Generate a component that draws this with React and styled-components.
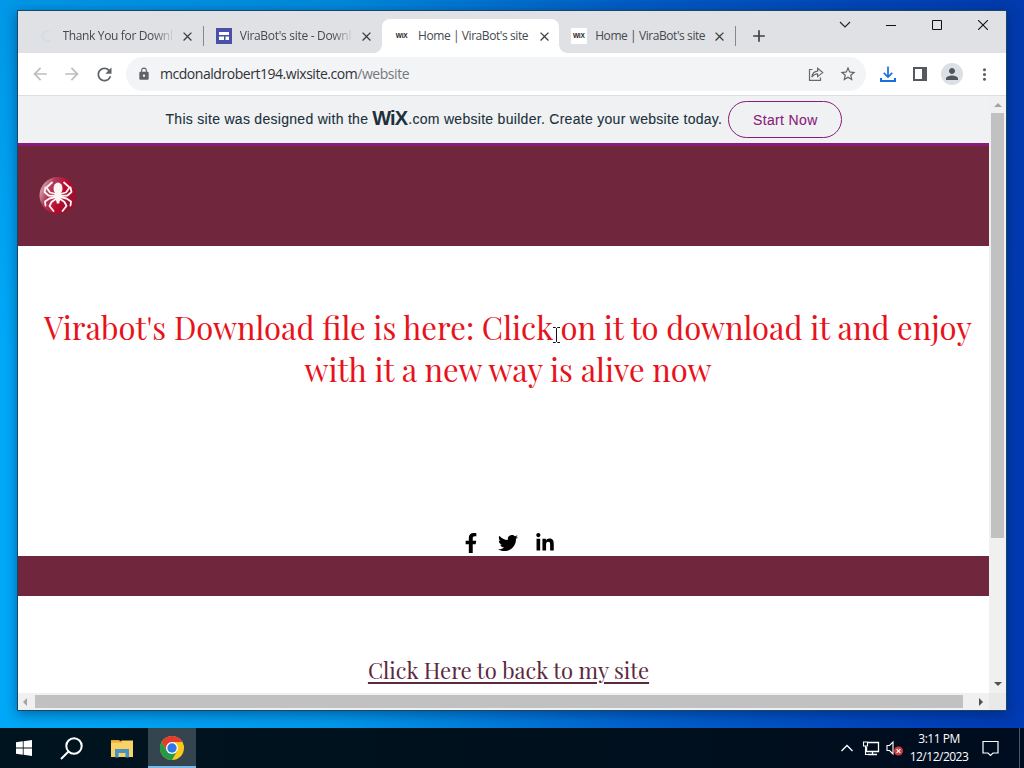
"use strict";

/*******************************************************
  IMPORT STATEMENTS
*******************************************************/
import React from "react";
import styled, {createGlobalStyle} from "styled-components";
import {FaFacebookF,FaTwitter,FaLinkedinIn} from "react-icons/fa";
import {MdArrowBack,MdArrowForward,MdRefresh,MdLock,MdStarBorder,MdPerson,MdMoreVert,MdClose,MdAdd} from "react-icons/md";

const Theme = {
  ui: `"Open Sans", "Noto Sans", sans-serif`,
  sans: `"Liberation Sans", Arial, sans-serif`,
  serif: `"Playfair Display", "Liberation Serif", serif`,
  maroon: '#70273e',
  strip: '#dfe1e5',
  icon: '#5f6368',
  purple: '#8a1a7c',
  scrollTrack: '#f0f0f0',
  scrollThumb: '#c1c1c1'
};

const GlobalStyle = createGlobalStyle`
  * { box-sizing: border-box; }
  body { margin: 0; overflow: hidden; }
  svg { display: block; flex: none; }
`;

/*******************************************************
  DESKTOP AND WINDOW FRAME
*******************************************************/
const Desktop = styled.div`
  width: 1024px;
  height: 768px;
  display: flex;
  flex-direction: column;
  justify-content: space-between;
  background:
    linear-gradient(to bottom, rgba(0,60,140,0.16), rgba(0,60,140,0) 45%),
    linear-gradient(to right, #00a9f8 0%, #0098ea 33%, #0062ce 62%, #0046bd 85%, #003ab2 100%);
`;

const Window = styled.div`
  width: 990px;
  height: 701px;
  margin: 10px 0 0 17px;
  border: 1px solid #17456b;
  background: #fff;
  display: flex;
  flex-direction: column;
  box-shadow: 0 3px 12px rgba(0,20,60,0.45);
`;

/*******************************************************
  TAB STRIP
*******************************************************/
const TabStrip = styled.div`
  height: 42px;
  flex: none;
  display: flex;
  align-items: flex-end;
  padding-left: 9px;
  background: ${Theme.strip};
`;

const TabBox = styled.div`
  position: relative;
  width: 177.3px;
  height: 34px;
  display: flex;
  align-items: center;
  padding-left: 12px;
  border-radius: 8px 8px 0 0;
  background: ${p => p.$active ? '#fff' : 'transparent'};
  &::before, &::after {
    content: ${p => p.$active ? '""' : 'none'};
    position: absolute;
    bottom: 0;
    width: 8px;
    height: 8px;
  }
  &::before {
    left: -8px;
    background: radial-gradient(circle at 0 0, transparent 7.5px, #fff 8px);
  }
  &::after {
    right: -8px;
    background: radial-gradient(circle at 100% 0, transparent 7.5px, #fff 8px);
  }
`;

const TabTitle = styled.div`
  width: ${p => p.$fade ? '114px' : '113px'};
  margin-left: ${p => p.$fade ? '7.5px' : '8.5px'};
  overflow: hidden;
  white-space: nowrap;
  font: 12px/18px ${Theme.ui};
  letter-spacing: ${p => p.$spacing || '-0.43px'};
  color: #45494d;
  ${p => p.$fade && 'mask-image: linear-gradient(to right, #000 80%, transparent);'}
`;

const TabClose = styled.div`
  margin-left: 5.5px;
  color: #3c4043;
`;

const TabDivider = styled.div`
  width: 1px;
  height: 20px;
  margin-left: 8px;
  background: #85888c;
`;

const WixFavicon = styled.div`
  width: 16px;
  height: 16px;
  background: #fff;
  text-align: center;
  font: bold 6.5px/16px ${Theme.sans};
  letter-spacing: -0.2px;
  color: #222;
`;

const NewTab = styled.div`
  height: 34px;
  margin-left: 13px;
  display: flex;
  align-items: center;
  color: #3c4043;
`;

const WindowButtons = styled.div`
  align-self: flex-start;
  margin-left: auto;
  height: 28px;
  display: flex;
`;

const WindowButton = styled.div`
  width: 46px;
  display: flex;
  align-items: center;
  justify-content: center;
`;

const LoadingFavicon = () => (
  <svg width="16" height="16" viewBox="0 0 16 16">
    <path d="M11 4.500A4.500 5 0 1 0 11 12" fill="none" stroke="#d5dde3" strokeWidth="2"/>
  </svg>
);

const SiteFavicon = () => (
  <svg width="16" height="16" viewBox="0 0 16 16">
    <rect width="16" height="16" fill="#4a50a8"/>
    <path d="M3 4h10v3H3zM3 8.500h5v3.500H3zM9.500 8.500H13V12H9.500z" fill="#fff"/>
  </svg>
);

const Tab = ({icon,title,active,fade,divider,spacing}) => {
  return (
    <TabBox $active={active}>
      {icon}
      <TabTitle $fade={fade} $spacing={spacing}>{title}</TabTitle>
      <TabClose><MdClose size={15}/></TabClose>
      {divider ? <TabDivider/> : null}
    </TabBox>
  )
}

/*******************************************************
  TOOLBAR
*******************************************************/
const Toolbar = styled.div`
  height: 43px;
  flex: none;
  display: flex;
  align-items: center;
  padding: 0 6px 0 6px;
  background: #fff;
  border-bottom: 1px solid #dcdee0;
`;

const ToolButton = styled.div`
  width: 32px;
  height: 32px;
  display: flex;
  align-items: center;
  justify-content: center;
  color: ${p => p.$disabled ? '#bbbdc0' : Theme.icon};
`;

const AddressBar = styled.div`
  width: 740px;
  height: 34px;
  margin: 0 6px 0 6px;
  padding: 0 2px 0 11px;
  display: flex;
  align-items: center;
  border-radius: 17px;
  background: #f3f4f6;
`;

const Address = styled.div`
  flex: 1;
  margin-left: 9px;
  font: 14px/20px ${Theme.ui};
  letter-spacing: -0.46px;
  color: #303236;
  span { color: #75787c; }
`;

const Avatar = styled.div`
  width: 22px;
  height: 22px;
  border-radius: 50%;
  display: flex;
  align-items: center;
  justify-content: center;
  background: #dcdfe4;
  color: #51555c;
`;

const ShareIcon = () => (
  <svg width="16" height="16" viewBox="0 0 16 16" fill="none" stroke="#66696e" strokeWidth="1.2">
    <path d="M4.500 3.500H1.500V14.300H12.500V11.500"/>
    <path d="M3.800 11.200C4.300 7.500 6.300 5.400 9.600 5.200V2.300L14.700 6.600L9.600 10.600V7.800C7.200 7.800 5.300 8.800 3.800 11.200Z"/>
  </svg>
);

const DownloadIcon = () => (
  <svg width="16" height="17" viewBox="0 0 16 17" fill="none" stroke="#1a6fe0" strokeWidth="2">
    <path d="M8 0.500V10.500M3.800 6.800L8 11L12.200 6.800" strokeWidth="1.700"/>
    <path d="M1 12V15H15V12"/>
  </svg>
);

const PanelIcon = () => (
  <svg width="14" height="14" viewBox="0 0 14 14">
    <path d="M1 1H13V13H1Z" fill="none" stroke="#55585d" strokeWidth="2"/>
    <path d="M9 1H13V13H9Z" fill="#55585d"/>
  </svg>
);

/*******************************************************
  WEB PAGE
*******************************************************/
const Viewport = styled.div`
  flex: 1;
  min-height: 0;
  display: grid;
  grid-template-columns: 971px 17px;
  grid-template-rows: 1fr 17px;
`;

const Page = styled.div`
  min-height: 0;
  overflow: hidden;
  background: #fff;
`;

const Banner = styled.div`
  height: 47px;
  display: flex;
  align-items: center;
  padding: 0 0 1px 147.5px;
  white-space: nowrap;
  background: #eff1f2;
  font: 14px/20px ${Theme.sans};
  color: #20303c;
`;

const BannerText = styled.span`
  letter-spacing: 0.29px;
  -webkit-text-stroke: 0.1px #20303c;
`;

const WixWord = styled.span`
  width: 36px;
  margin-left: 4px;
  font: bold 20px/20px ${Theme.sans};
  letter-spacing: -0.9px;
  padding-bottom: 2px;
`;

const StartButton = styled.div`
  width: 114px;
  height: 37px;
  margin: 1px 0 0 6px;
  border: 1px solid ${Theme.purple};
  border-radius: 19px;
  text-align: center;
  line-height: 36px;
  letter-spacing: 0.36px;
  -webkit-text-stroke: 0.1px ${Theme.purple};
  color: ${Theme.purple};
`;

const SiteHeader = styled.div`
  height: 103px;
  padding: 31px 0 0 21px;
  border-top: 3px solid ${Theme.purple};
  background: ${Theme.maroon};
`;

const Hero = styled.div`
  height: 310px;
  padding-top: 60px;
  display: flex;
  flex-direction: column;
  align-items: center;
`;

const HeroLine = styled.div`
  position: relative;
  height: 42px;
  margin-left: 9px;
  white-space: nowrap;
  font: 31px/42px ${Theme.serif};
  color: #e8121b;
`;

const Social = styled.div`
  display: flex;
  align-items: center;
  gap: 17px;
  margin: auto 0 3px 8px;
`;

const FooterBar = styled.div`
  height: 40px;
  background: ${Theme.maroon};
`;

const BackLink = styled.div`
  padding: 59px 0 0 10px;
  text-align: center;
  font: 22px/30px ${Theme.serif};
  color: #5c2a40;
  text-decoration: underline;
  text-decoration-thickness: 2px;
  text-underline-offset: 3px;
`;

const TextCursor = styled.svg`
  position: absolute;
  left: 508px;
  top: 21px;
`;

/* Round red badge with a white spider on it */
const SpiderLogo = () => (
  <svg width="38" height="38" viewBox="0 0 38 38">
    <defs>
      <linearGradient id="badge" x1="0" y1="0.35" x2="0.8" y2="0.7">
        <stop offset="0" stopColor="#d9a5b2"/>
        <stop offset="0.3" stopColor="#b03a58"/>
        <stop offset="0.7" stopColor="#b80a2e"/>
        <stop offset="1" stopColor="#98122f"/>
      </linearGradient>
    </defs>
    <circle cx="19" cy="18.500" r="18.500" fill="url(#badge)"/>
    <g fill="none" stroke="#fff4f4" strokeWidth="1.800" strokeLinejoin="round" strokeLinecap="round">
      <path d="M17 17L11 15.500L7.500 10.500L13 5.500M21 17L27 15.500L30.500 10.500L25 5.500"/>
      <path d="M17 19L9.500 18.500L5.500 15L6.500 10.500M21 19L28.500 18.500L32.500 15L31.500 10.500"/>
      <path d="M17 20L10.500 21.500L6 24.500L6.500 28.500M21 20L27.500 21.500L32 24.500L31.500 28.500"/>
      <path d="M17.500 21.500L12.500 25L10.500 29L14.500 34M20.500 21.500L25.500 25L27.500 29L23.500 34"/>
    </g>
    <ellipse cx="19" cy="11.500" rx="4.500" ry="6" fill="#fff4f4"/>
    <path d="M15.500 16H22.500L22 22L20.500 24.500L20.300 26.500H17.700L17.500 24.500L16 22Z" fill="#fff4f4"/>
  </svg>
);

/*******************************************************
  SCROLLBARS
*******************************************************/
const VScroll = styled.div`
  display: flex;
  flex-direction: column;
  align-items: center;
  padding: 5px 0 5px;
  background: ${Theme.scrollTrack};
`;

const VThumb = styled.div`
  width: 13px;
  height: 425px;
  margin: 4px 0 auto;
  background: ${Theme.scrollThumb};
`;

const HScroll = styled.div`
  display: flex;
  align-items: center;
  padding: 0 4px 0 4px;
  background: ${Theme.scrollTrack};
`;

const HThumb = styled.div`
  width: 928px;
  height: 13px;
  margin: 0 auto 0 5px;
  background: ${Theme.scrollThumb};
`;

const Corner = styled.div`
  background: #e9e9e9;
`;

const Arrow = ({d,dim}) => (
  <svg width="8" height="8" viewBox="0 0 8 8"><path d={d} fill={dim ? '#a3a3a3' : '#505050'}/></svg>
);

/*******************************************************
  TASKBAR
*******************************************************/
const Taskbar = styled.div`
  height: 40px;
  display: flex;
  color: #fff;
  background: linear-gradient(to right, #00141f, #00111d 50%, #000c1f);
`;

const TaskButton = styled.div`
  width: ${p => p.$width || 48}px;
  display: flex;
  align-items: center;
  justify-content: center;
  background: ${p => p.$active ? '#34454f' : 'transparent'};
  border-bottom: ${p => p.$active ? '2px solid #76b9ed' : '0'};
  padding-top: ${p => p.$active ? '2px' : '0'};
`;

const Tray = styled.div`
  margin-left: auto;
  display: flex;
  align-items: center;
`;

const Clock = styled.div`
  width: 70px;
  text-align: center;
  white-space: nowrap;
  font: 12px/18px ${Theme.ui};
  letter-spacing: -0.5px;
`;

const NotifyIcon = styled.svg`
  margin-left: 8px;
`;

const ShowDesktop = styled.div`
  width: 5px;
  height: 40px;
  margin-left: 20px;
  border-left: 1px solid #4a5563;
`;

const ChromeIcon = () => (
  <svg width="24" height="24" viewBox="0 0 24 24">
    <circle cx="12" cy="12" r="12" fill="#fbc919"/>
    <path d="M12 6H22.400A12 12 0 0 0 1.600 6L6.800 15Z" fill="#e33b2e"/>
    <path d="M1.600 6A12 12 0 0 0 12 24L17.200 15L12 12L6.800 15Z" fill="#229a48"/>
    <circle cx="12" cy="12" r="6" fill="#fff"/>
    <circle cx="12" cy="12" r="4.700" fill="#2f77e6"/>
  </svg>
);

const FolderIcon = () => (
  <svg width="22" height="19" viewBox="0 0 22 19">
    <path d="M0 1H8L10 3H0Z" fill="#e0a02c"/>
    <path d="M0 2.500H9.500L11 1.500H22V18H0Z" fill="#fad163"/>
    <path d="M0 2.500H9.500L11 1.500V3.500H0Z" fill="#e5aa37"/>
    <path d="M4 10H18V18.500H14.500V14H7.500V18.500H4Z" fill="#4593c5"/>
  </svg>
);

const TrayIcons = () => (
  <svg width="64" height="20" viewBox="0 0 64 20" fill="none" stroke="#fff" strokeWidth="1.300">
    <path d="M1.500 13L7 7.500L12.500 13"/>
    <path d="M28 4.500H38.500V13.500H26.500V9M32.500 13.500V16.500M28 16.500H37"/>
    <path d="M23.500 4H27.500V8H23.500ZM25.500 8V16.500H28" strokeWidth="1.100"/>
    <path d="M47 7.500H49.500L53 4V16L49.500 12.500H47Z" strokeWidth="1.100"/>
    <circle cx="58.500" cy="13" r="4.500" fill="#d3393c" stroke="none"/>
    <path d="M56.700 11.200L60.300 14.800M60.300 11.200L56.700 14.800" strokeWidth="1.200"/>
  </svg>
);

/*******************************************************
  COMPONENT DEFINITION
*******************************************************/
const ChromeWindow = () => {
  return (
    <Window>
      <TabStrip>
        <Tab icon={<LoadingFavicon/>} title="Thank You for Downl" fade divider spacing="-0.35px"/>
        <Tab icon={<SiteFavicon/>} title="ViraBot's site - Downl" fade spacing="-0.3px"/>
        <Tab icon={<WixFavicon>WiX</WixFavicon>} title="Home | ViraBot's site" active/>
        <Tab icon={<WixFavicon>WiX</WixFavicon>} title="Home | ViraBot's site" divider/>
        <NewTab><MdAdd size={20}/></NewTab>
        <WindowButtons>
          <WindowButton><svg width="12" height="8" viewBox="0 0 12 8"><path d="M1 1L6 6L11 1" fill="none" stroke="#222" strokeWidth="1.100"/></svg></WindowButton>
          <WindowButton><svg width="10" height="2" viewBox="0 0 10 2"><path d="M0 1.500H10" stroke="#111" strokeWidth="1"/></svg></WindowButton>
          <WindowButton><svg width="10" height="10" viewBox="0 0 10 10"><path d="M0.500 0.500H9.500V9.500H0.500Z" fill="none" stroke="#111"/></svg></WindowButton>
          <WindowButton><svg width="10" height="10" viewBox="0 0 10 10"><path d="M0 0L10 10M10 0L0 10" stroke="#111" strokeWidth="1.100"/></svg></WindowButton>
        </WindowButtons>
      </TabStrip>
      <Toolbar>
        <ToolButton $disabled><MdArrowBack size={20}/></ToolButton>
        <ToolButton $disabled><MdArrowForward size={20}/></ToolButton>
        <ToolButton><MdRefresh size={21}/></ToolButton>
        <AddressBar>
          <MdLock size={14} color={Theme.icon}/>
          <Address>mcdonaldrobert194.wixsite.com<span>/website</span></Address>
          <ToolButton><ShareIcon/></ToolButton>
          <ToolButton><MdStarBorder size={18}/></ToolButton>
        </AddressBar>
        <ToolButton><DownloadIcon/></ToolButton>
        <ToolButton><PanelIcon/></ToolButton>
        <ToolButton><Avatar><MdPerson size={18}/></Avatar></ToolButton>
        <ToolButton><MdMoreVert size={19}/></ToolButton>
      </Toolbar>
      <Viewport>
        <Page>
          <Banner>
            <BannerText>This site was designed with the</BannerText>
            <WixWord>WiX</WixWord>
            <BannerText>.com website builder. Create your website today.</BannerText>
            <StartButton>Start Now</StartButton>
          </Banner>
          <SiteHeader><SpiderLogo/></SiteHeader>
          <Hero>
            <HeroLine>
              Virabot's Download file is here: Click on it to download it and enjoy
              <TextCursor width="9" height="16" viewBox="0 0 9 16">
                <path d="M1 0.500H3.500L4.500 1.500L5.500 0.500H8M4.500 1.500V14.500M1 15.500H3.500L4.500 14.500L5.500 15.500H8" fill="none" stroke="#111"/>
              </TextCursor>
            </HeroLine>
            <HeroLine>with it a new way is alive now</HeroLine>
            <Social>
              <FaFacebookF size={20}/>
              <FaTwitter size={20}/>
              <FaLinkedinIn size={20}/>
            </Social>
          </Hero>
          <FooterBar/>
          <BackLink>Click Here to back to my site</BackLink>
        </Page>
        <VScroll>
          <Arrow d="M0 6L4 2L8 6Z" dim/>
          <VThumb/>
          <Arrow d="M0 2H8L4 6Z"/>
        </VScroll>
        <HScroll>
          <Arrow d="M5 0V8L1 4Z" dim/>
          <HThumb/>
          <Arrow d="M2 0L6 4L2 8Z"/>
        </HScroll>
        <Corner/>
      </Viewport>
    </Window>
  )
}

const App = () => {
  return (
    <Desktop>
      <GlobalStyle/>
      <ChromeWindow/>
      <Taskbar>
        <TaskButton>
          <svg width="16" height="16" viewBox="0 0 16 16" fill="#fff"><path d="M0 2.200L6.800 1.300V7.600H0ZM7.600 1.200L16 0V7.600H7.600ZM0 8.400H6.800V14.700L0 13.800ZM7.600 8.400H16V16L7.600 14.800Z"/></svg>
        </TaskButton>
        <TaskButton>
          <svg width="24" height="23" viewBox="0 0 24 23" fill="none" stroke="#fff" strokeWidth="2"><circle cx="14" cy="9" r="7.700"/><path d="M8.500 14.500L1 22"/></svg>
        </TaskButton>
        <TaskButton $width={52}><FolderIcon/></TaskButton>
        <TaskButton $active><ChromeIcon/></TaskButton>
        <Tray>
          <TrayIcons/>
          <Clock>3:11 PM<br/>12/12/2023</Clock>
          <NotifyIcon width="17" height="17" viewBox="0 0 17 17"><path d="M1 1.500H16V13H11L8.500 15.500L6 13H1Z" fill="none" stroke="#fff" strokeWidth="1.200"/></NotifyIcon>
          <ShowDesktop/>
        </Tray>
      </Taskbar>
    </Desktop>
  )
}

export default App;
